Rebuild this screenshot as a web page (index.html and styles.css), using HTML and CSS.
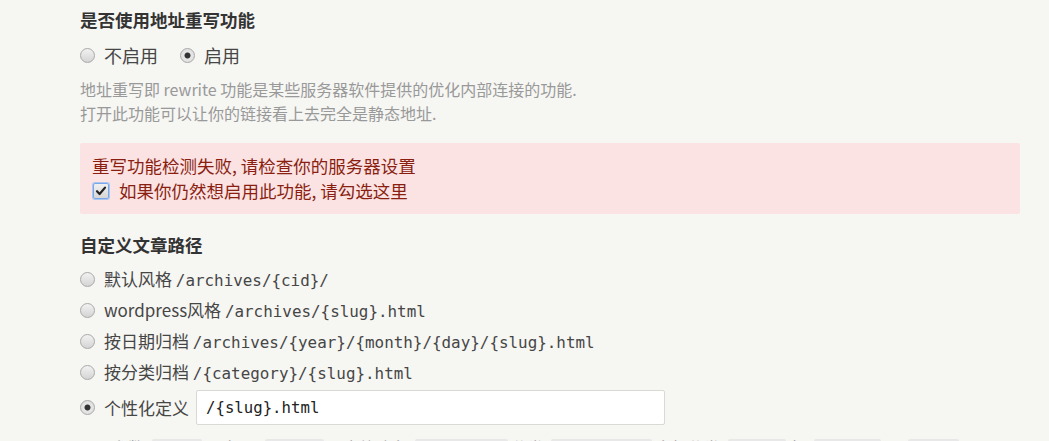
FILE: index.html
```html
<!DOCTYPE html>
<html lang="zh-CN">
<head>
<meta charset="utf-8">
<title>永久链接设置</title>
<link rel="stylesheet" href="styles.css">
</head>
<body>
<div class="page">
  <section class="field">
    <h3 class="label">是否使用地址重写功能</h3>
    <div class="radio-inline">
      <label class="opt"><input type="radio" name="rewrite" class="radio"><span>不启用</span></label>
      <label class="opt"><input type="radio" name="rewrite" class="radio" checked><span>启用</span></label>
    </div>
    <p class="desc">地址重写即 rewrite 功能是某些服务器软件提供的优化内部连接的功能.<br>打开此功能可以让你的链接看上去完全是静态地址.</p>
  </section>

  <div class="message error">
    <div>重写功能检测失败, 请检查你的服务器设置</div>
    <label class="check-row">
      <span class="checkbox"><svg width="12" height="12" viewBox="0 0 12 12"><path d="M2 6.2 L4.6 9 L10 2.6" fill="none" stroke="#222" stroke-width="2.2" stroke-linecap="round" stroke-linejoin="round"/></svg></span>
      <span>如果你仍然想启用此功能, 请勾选这里</span>
    </label>
  </div>

  <section class="field">
    <h3 class="label second">自定义文章路径</h3>
    <ul class="options">
      <li><label class="opt"><input type="radio" name="pattern" class="radio"><span>默认风格 <code>/archives/{cid}/</code></span></label></li>
      <li><label class="opt"><input type="radio" name="pattern" class="radio"><span>wordpress风格 <code>/archives/{slug}.html</code></span></label></li>
      <li><label class="opt"><input type="radio" name="pattern" class="radio"><span>按日期归档 <code>/archives/{year}/{month}/{day}/{slug}.html</code></span></label></li>
      <li><label class="opt"><input type="radio" name="pattern" class="radio"><span>按分类归档 <code>/{category}/{slug}.html</code></span></label></li>
      <li class="custom"><label class="opt"><input type="radio" name="pattern" class="radio" checked><span>个性化定义</span></label><input type="text" class="text-input" value="/{slug}.html"></li>
    </ul>
    <p class="desc bottom">可用参数: <code class="tag">{cid}</code> 日志 ID, <code class="tag">{slug}</code> 日志缩略名, <code class="tag">{category}</code> 分类, <code class="tag">{directory}</code> 多级分类, <code class="tag">{year}</code> 年, <code class="tag">{month}</code> 月, <code class="tag">{day}</code> 日</p>
  </section>
</div>
</body>
</html>
```

FILE: styles.css
```css
html, body {
  margin: 0;
  padding: 0;
  background: #f6f6f3;
}
body {
  font-family: "Noto Sans CJK SC", "Noto Sans", sans-serif;
  color: #444;
  font-size: 18px;
}
.page {
  padding: 8px 29px 0 80px;
}
.field { margin: 0; }
.label {
  margin: 0;
  font-size: 17.5px;
  line-height: 24px;
  font-weight: bold;
  color: #333;
}
.label.second { margin-top: 19px; }
.radio-inline {
  display: flex;
  gap: 22px;
  margin-top: 11px;
  height: 24px;
  align-items: center;
}
.opt {
  display: flex;
  align-items: center;
  line-height: 24px;
  color: #464646;
}
.radio {
  appearance: none;
  -webkit-appearance: none;
  margin: 0 9px 0 0;
  width: 15px;
  height: 15px;
  border-radius: 50%;
  border: 1px solid #a9a9a9;
  background: linear-gradient(#f2f2f2, #d4d4d4);
  box-sizing: border-box;
  flex: none;
}
.radio:checked {
  background: radial-gradient(circle, #333 0 2.6px, #e6e6e6 3.4px, #dcdcdc 100%);
}
.desc {
  margin: 10px 0 0;
  font-size: 16px;
  line-height: 24px;
  color: #999;
}
.message.error {
  margin-top: 18px;
  background: #fbe3e4;
  color: #8a1f11;
  border-radius: 2px;
  padding: 10px 12px 11px;
  line-height: 25px;
  font-size: 17.5px;
}
.check-row {
  display: flex;
  align-items: center;
}
.checkbox {
  width: 14px;
  height: 14px;
  border: 1px solid #7aa7e8;
  box-shadow: 0 0 0 1px #a9c6f0;
  background: linear-gradient(#f0f0f0, #d6d6d6);
  border-radius: 2px;
  margin: 0 10px 0 1px;
  display: flex;
  align-items: center;
  justify-content: center;
}
.options {
  list-style: none;
  margin: 7px 0 0;
  padding: 0;
  font-size: 17px;
}
.options li {
  height: 31px;
  display: flex;
  align-items: center;
}
.options li.custom {
  height: 39px;
}
code {
  font-family: "DejaVu Sans Mono", "Liberation Mono", monospace;
  font-size: 15.9px;
  color: #464646;
}
.text-input {
  margin-left: 7px;
  width: 469px;
  height: 35px;
  box-sizing: border-box;
  border: 1px solid #d9d9d6;
  border-radius: 2px;
  background: #fff;
  padding: 0 9px;
  font-family: "DejaVu Sans Mono", "Liberation Mono", monospace;
  font-size: 15.7px;
  color: #222;
  outline: none;
}
.desc.bottom {
  margin-top: 8px;
}
code.tag {
  background: #e8e8e8;
  color: #c13;
  padding: 2px 4px;
  border-radius: 2px;
  font-size: 14px;
}
```
